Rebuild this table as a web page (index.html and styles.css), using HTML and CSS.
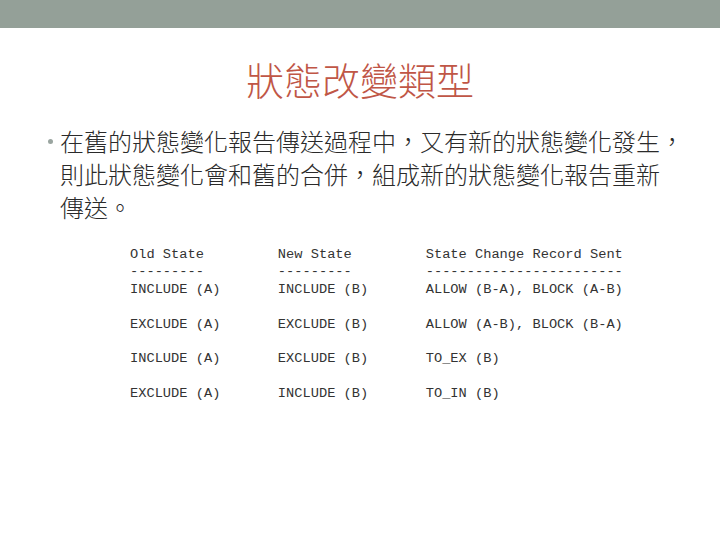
FILE: index.html
```html
<!DOCTYPE html>
<html>
<head>
<meta charset="utf-8">
<link rel="stylesheet" href="styles.css">
</head>
<body>
<div class="topbar"></div>
<h1 class="title">狀態改變類型</h1>
<ul class="bullets">
  <li>在舊的狀態變化報告傳送過程中，又有新的狀態變化發生，<br>則此狀態變化會和舊的合併，組成新的狀態變化報告重新<br>傳送。</li>
</ul>
<pre class="table">Old State         New State         State Change Record Sent
---------         ---------         ------------------------
INCLUDE (A)       INCLUDE (B)       ALLOW (B-A), BLOCK (A-B)

EXCLUDE (A)       EXCLUDE (B)       ALLOW (A-B), BLOCK (B-A)

INCLUDE (A)       EXCLUDE (B)       TO_EX (B)

EXCLUDE (A)       INCLUDE (B)       TO_IN (B)</pre>
</body>
</html>
```
FILE: styles.css
```css
html, body {
  margin: 0;
  padding: 0;
  background: #ffffff;
}
body {
  width: 720px;
  height: 540px;
  overflow: hidden;
  font-family: "Noto Sans CJK TC", "Noto Sans", sans-serif;
}
.topbar {
  height: 28px;
  background: #94a098;
}
.title {
  margin: 31px 0 0 0;
  text-align: center;
  font-size: 38px;
  font-weight: 300;
  line-height: 40px;
  color: #c05646;
}
.bullets {
  list-style: none;
  margin: 25px 0 0 0;
  padding: 0 20px 0 60px;
}
.bullets li {
  position: relative;
  font-size: 24px;
  font-weight: 300;
  line-height: 33px;
  color: #2a2a2a;
  white-space: nowrap;
}
.bullets li::before {
  content: "";
  position: absolute;
  left: -12px;
  top: 15px;
  width: 5px;
  height: 5px;
  border-radius: 50%;
  background: #9aa5a0;
}
.table {
  margin: 23px 0 0 130px;
  font-family: "Liberation Mono", monospace;
  font-size: 13.7px;
  line-height: 17.4px;
  color: #333;
}
```
